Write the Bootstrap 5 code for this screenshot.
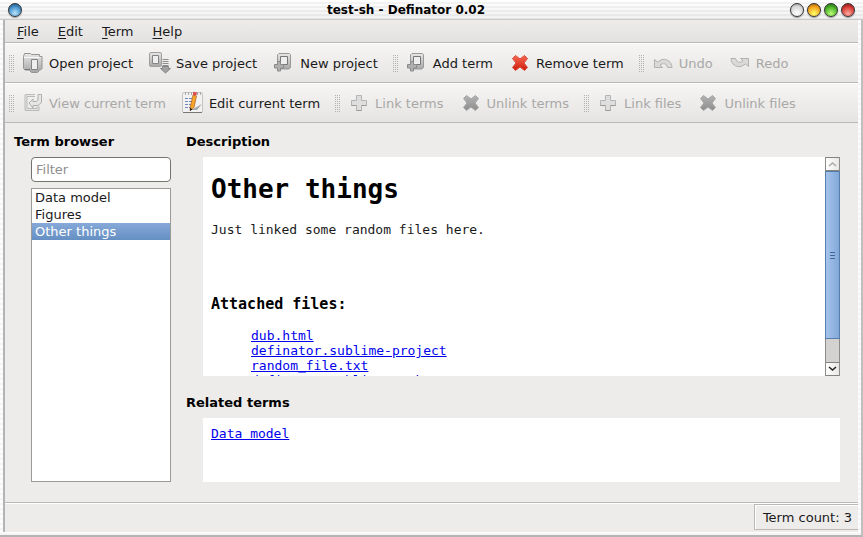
<!DOCTYPE html>
<html lang="en">
<head>
<meta charset="utf-8">
<meta name="viewport" content="width=device-width, initial-scale=1">
<title>test-sh - Definator 0.02</title>
<link rel="stylesheet" href="https://cdn.jsdelivr.net/npm/bootstrap@5.3.0/dist/css/bootstrap.min.css">
<style>
body{font:13px/17px "DejaVu Sans",sans-serif;color:#1a1a1a;background:#f6f6f6;overflow:hidden}
.titlebar{height:20px;padding:0 8px;background:linear-gradient(#fff6,#dcdcdc66),repeating-linear-gradient(#fff 0 2px,#ededed 2px 4px);border-bottom:1px solid #c8c8c8}
.titlebar h1{font-size:12px;line-height:18px;font-weight:bold;color:#000}
.orbs{gap:3px}
.orb{width:14px;height:14px;padding:0;border:1px solid #333;border-radius:50%;box-shadow:0 1px 1px #0005}
.orb-blue{background:radial-gradient(circle at 50% 75%,#b8e4ff,#4a94cc 55%,#0d4779)}
.orb-white{background:radial-gradient(circle at 50% 75%,#fff,#d8d8d8 60%,#888)}
.orb-yellow{background:radial-gradient(circle at 50% 80%,#ffff6a,#f4a31b 60%,#9b4e00)}
.orb-green{background:radial-gradient(circle at 50% 80%,#b9ff7c,#4aae26 60%,#175b05)}
.orb-red{background:radial-gradient(circle at 50% 80%,#ffaaa0,#d43a33 60%,#7a0c0c)}
.frame{border-right:2px solid #c0c0c0;border-bottom:2px solid #b4b4b4;padding:0 3px 3px 3px;background:repeating-linear-gradient(#fdfdfd 0 3px,#f5f5f5 3px 5px)}
.shell{background:#edeceb;border-left:2px solid #b4b4b4}
.menubar{height:23px;padding:0 4px;gap:3px;background:linear-gradient(#edeceb,#e3e2e0);border-bottom:1px solid #bab9b8}
.menubar a{color:#1a1a1a;text-decoration:none;padding:0 8px;line-height:23px}
.menubar u{text-underline-offset:2px}
.toolbar{height:40px;padding-left:4px;gap:1px;background:linear-gradient(#f6f5f4,#e5e4e2);border-top:1px solid #fff;border-bottom:1px solid #bab9b8}
.grip{width:5px;height:17px;margin:0 -1px 0 7px;background:#b4b3b2;-webkit-mask:conic-gradient(from 270deg at 1px 1px,#000 90deg,transparent 0) 0 0/2px 2px;mask:conic-gradient(from 270deg at 1px 1px,#000 90deg,transparent 0) 0 0/2px 2px}
.grip:first-child{margin-left:0}
.tool{font-size:13px;line-height:17px;padding:0 7px;gap:4px;border:0;color:#1a1a1a;border-radius:0}
.tool:disabled{color:#a9a8a7;opacity:1;border:0}
.tool svg{width:24px;height:24px;flex:none}
.tool:disabled svg.pale{opacity:.7}
.workspace{padding:9px 18px 20px 9px;gap:15px}
.sidebar{width:157px;flex:none}
.heading{font-size:13px;line-height:19px;font-weight:bold;color:#000;margin:0}
.inset-l{margin-left:17px}
.filter{height:25px;padding:0 4px;font-size:13px;line-height:17px;border:1px solid #75736f;border-radius:4px;color:#1a1a1a;margin-top:6px;background:#fff}
.filter::placeholder{color:#8f8e8d;opacity:1}
.terms{margin-top:6px;border:1px solid #9c9a97;background:#fff}
.terms .list-group-item{font-size:13px;line-height:17px;padding:0 3px;border:0;color:#1a1a1a;border-radius:0}
.terms .list-group-item.active{margin-top:0!important;background:linear-gradient(#86a9d8,#658fc3);color:#fff}
.doc{font:13px/15px "DejaVu Sans Mono",monospace;background:#fff;color:#1a1a1a}
.doc h2{font-size:26px;line-height:30px;font-weight:bold;color:#000;margin:0 0 18px}
.doc h3{font-size:15px;line-height:18px;font-weight:bold;color:#000;margin:58px 0 15px}
.doc p{margin:0}
.doc a{color:#00e;text-decoration:underline}
.doc ul{margin:0;padding-left:40px}
.description{height:219px;margin-top:6px}
.page-text{padding:17px 8px 0}
.related{margin-top:6px;padding:8px}
.related-title{margin-top:17px}
.scroller{width:15px;flex:none;background:#d3d2d0;border:solid #8e8c89;border-width:0 1px}
.scroller button{height:14px;padding:0;border:solid #858380;border-width:1px 0;background:linear-gradient(90deg,#fff,#e8e7e5)}
.scroller svg{display:block;margin:auto}
.thumb{height:168px;margin:0 -1px;border:1px solid #567ead;background:linear-gradient(90deg,#a6c4ec,#82a8d8)}
.thumb i{width:5px;height:1px;background:#40689b}
.thumb div{gap:2px}
.status{height:30px;padding-bottom:2px;border-top:1px solid #bab9b8;box-shadow:inset 0 1px #fff}
.count{margin-top:1px;padding:4px 6px 0 8px;line-height:18px;border:1px solid #bab9b8;border-right:0;box-shadow:inset 1px 1px #fff}
</style>
<script src="https://cdn.jsdelivr.net/npm/bootstrap@5.3.0/dist/js/bootstrap.bundle.min.js"></script>
</head>
<body>
<svg class="position-absolute" width="0" height="0" aria-hidden="true">
  <defs>
    <linearGradient id="gray" x2="0" y2="1"><stop stop-color="#e8e8e8"/><stop offset="1" stop-color="#a6a6a6"/></linearGradient>
    <linearGradient id="dim" x2="0" y2="1"><stop stop-color="#b3b3b3"/><stop offset="1" stop-color="#8d8d8d"/></linearGradient>
    <linearGradient id="red" x2="0" y2="1"><stop stop-color="#fa6a50"/><stop offset="1" stop-color="#cb1c0c"/></linearGradient>
    <symbol id="open" viewBox="0 0 24 24"><path d="M3.500 2.500h6l1 1h8v2h2.500v12l-1.500 1.500h-1.500v1l-1.500 1.500h-6l-1.500-1.500v-1h-5L2.500 17.500v-12z" fill="url(#gray)" stroke="#949494"/><path d="M3 6.500h17" stroke="#f7f7f7"/><path d="M10.500 8.500h6v10h-6z" fill="#eee" stroke="#838383"/><path d="M4 18.500h5" stroke="#777"/></symbol>
    <symbol id="save" viewBox="0 0 24 24"><rect x="1.500" y="1.500" width="12" height="14" rx="1.500" fill="url(#gray)" stroke="#a0a0a0"/><path d="M4.500 4.500h6v8h-6z" fill="#eee" stroke="#858585"/><path d="M14.500 8.500h6M14.500 10.500h6M14.500 12.500h6M14.500 14.500h6" stroke="#8d8d8d"/><path d="M14.500 15.500h6v2h2l-5 4.500-5-4.500h2z" fill="#a2a2a2" stroke="#868686"/></symbol>
    <symbol id="new" viewBox="0 0 24 24"><path d="M5.500 4 7 2.500h10.500l1 1v13l-1.500 1.500h-11.500z" fill="url(#gray)" stroke="#999"/><path d="M8.500 5.500h7v8h-7z" fill="#eee" stroke="#777"/><path d="M5.500 10.500h3v3h3v3.500h-3v3h-3v-3h-3v-3.500h3z" fill="#b0b0b0" stroke="#8a8a8a"/></symbol>
    <symbol id="view" viewBox="0 0 24 24"><path d="M14 4.500H5v14h12v-3" fill="none" stroke="#a5a5a5" stroke-width="3" stroke-linejoin="round"/><path d="M14 4.500H5v14h12v-3" fill="none" stroke="#e4e4e4"/><path d="M8 12 12 8v2.500h3.500l1.500-1.500V3.500h3.500v8l-3.500 3h-5V17z" fill="#e4e4e4" stroke="#949494"/></symbol>
    <symbol id="edit" viewBox="0 0 24 24"><rect x="1.500" y="1.500" width="20" height="20" rx="1.500" fill="#f2f2f2" stroke="#c4c4c4"/><path d="M2 21.500h19" stroke="#777"/><path d="M4.500 1v3m3-3v3m3-3v3m3-3v3m3-3v3m3-3v3" stroke="#aaa"/><path d="M4 7.500h9M4 10.500h7M4 13.500h6M4 16.500h5" stroke="#7186ba" stroke-dasharray="3 1"/><path d="m10 19 11-6-5 6z" fill="#aaa"/><path d="m12 4 3.500 1L13 16.500 9 19.500l.3-4z" fill="#f7a52b" stroke="#ad621c" stroke-width=".7"/><path d="m12.300.8 3.700.8-.6 3-3.500-.7z" fill="#de4c4c"/><path d="m9.200 16.500-.3 3.500 2.500-1.500z" fill="#222"/></symbol>
    <symbol id="cross" viewBox="0 0 24 24"><path d="M7.500 4.500 12 8l4.500-3.500 3 3-3.500 4.500 3.500 4.500-3 3L12 16l-4.500 3.500-3-3L8 12 4.500 7.500z" stroke-width="1" stroke-linejoin="round"/></symbol>
    <symbol id="plus" viewBox="0 0 24 24"><path d="M9.500 4.500h5v5h5v5h-5v5h-5v-5h-5v-5h5z" fill="#dedede" stroke="#b4b4b4" stroke-linejoin="round"/><path d="M9.500 19.500h5M4.500 14.500h5m5 0h5" stroke="#999"/></symbol>
    <symbol id="undo" viewBox="0 0 24 24"><path d="M3.500 8.500v8h8L9 14c3-2 6-2 7.500 2.500H21c0-5.500-5-9-10-8L6.500 11z" fill="#d2d2d2" stroke="#999" stroke-linejoin="round"/></symbol>
  </defs>
</svg>
<div class="d-flex flex-column vh-100">
  <header class="titlebar d-flex align-items-center flex-shrink-0">
    <button class="orb orb-blue" aria-label="Window menu"></button>
    <h1 class="flex-grow-1 text-center m-0">test-sh - Definator 0.02</h1>
    <div class="orbs d-flex">
      <button class="orb orb-white" aria-label="Shade"></button>
      <button class="orb orb-yellow" aria-label="Minimize"></button>
      <button class="orb orb-green" aria-label="Maximize"></button>
      <button class="orb orb-red" aria-label="Close"></button>
    </div>
  </header>
  <div class="frame d-flex flex-column flex-grow-1">
    <div class="shell d-flex flex-column flex-grow-1">
      <nav class="menubar d-flex flex-shrink-0">
        <a href="#"><u>F</u>ile</a><a href="#"><u>E</u>dit</a><a href="#"><u>T</u>erm</a><a href="#"><u>H</u>elp</a>
      </nav>
      <div class="toolbar d-flex align-items-center flex-shrink-0 text-nowrap">
        <span class="grip"></span>
        <button class="tool btn d-flex align-items-center"><svg><use href="#open"/></svg>Open project</button>
        <button class="tool btn d-flex align-items-center"><svg><use href="#save"/></svg>Save project</button>
        <button class="tool btn d-flex align-items-center"><svg><use href="#new"/></svg>New project</button>
        <span class="grip"></span>
        <button class="tool btn d-flex align-items-center"><svg><use href="#new"/></svg>Add term</button>
        <button class="tool btn d-flex align-items-center"><svg fill="url(#red)" stroke="#d8493b"><use href="#cross"/></svg>Remove term</button>
        <span class="grip"></span>
        <button class="tool btn d-flex align-items-center" disabled><svg class="pale"><use href="#undo"/></svg>Undo</button>
        <button class="tool btn d-flex align-items-center" disabled><svg class="pale" viewBox="0 0 24 24"><g transform="rotate(180 12 12)"><use href="#undo" width="24" height="24"/></g></svg>Redo</button>
      </div>
      <div class="toolbar d-flex align-items-center flex-shrink-0 text-nowrap">
        <span class="grip"></span>
        <button class="tool btn d-flex align-items-center" disabled><svg class="pale"><use href="#view"/></svg>View current term</button>
        <button class="tool btn d-flex align-items-center"><svg><use href="#edit"/></svg>Edit current term</button>
        <span class="grip"></span>
        <button class="tool btn d-flex align-items-center" disabled><svg><use href="#plus"/></svg>Link terms</button>
        <button class="tool btn d-flex align-items-center" disabled><svg fill="url(#dim)" stroke="#a5a5a5"><use href="#cross"/></svg>Unlink terms</button>
        <span class="grip"></span>
        <button class="tool btn d-flex align-items-center" disabled><svg><use href="#plus"/></svg>Link files</button>
        <button class="tool btn d-flex align-items-center" disabled><svg fill="url(#dim)" stroke="#a5a5a5"><use href="#cross"/></svg>Unlink files</button>
      </div>
      <main class="workspace d-flex flex-grow-1">
        <section class="sidebar d-flex flex-column">
          <h2 class="heading"><label for="filter">Term browser</label></h2>
          <div class="inset-l d-flex flex-column flex-grow-1">
            <input class="filter w-100" id="filter" type="text" placeholder="Filter">
            <div class="terms list-group rounded-0 flex-grow-1">
              <a href="#" class="list-group-item">Data model</a>
              <a href="#" class="list-group-item">Figures</a>
              <a href="#" class="list-group-item active">Other things</a>
            </div>
          </div>
        </section>
        <section class="d-flex flex-column flex-grow-1">
          <h2 class="heading">Description</h2>
          <div class="description doc inset-l d-flex overflow-hidden">
            <article class="page-text flex-grow-1">
              <h2>Other things</h2>
              <p>Just linked some random files here.</p>
              <h3>Attached files:</h3>
              <ul class="list-unstyled">
                <li><a href="#">dub.html</a></li>
                <li><a href="#">definator.sublime-project</a></li>
                <li><a href="#">random_file.txt</a></li>
                <li><a href="#">definator.sublime-workspace</a></li>
              </ul>
            </article>
            <div class="scroller d-flex flex-column">
              <button aria-label="Scroll up"><svg width="9" height="6"><path d="m1 5 3.500-3L8 5" fill="none" stroke="#aaa" stroke-width="1.500"/></svg></button>
              <div class="thumb d-flex align-items-center justify-content-center"><div class="d-flex flex-column"><i></i><i></i><i></i></div></div>
              <button class="mt-auto" aria-label="Scroll down"><svg width="9" height="6"><path d="m1 1 3.500 3L8 1" fill="none" stroke="#222" stroke-width="1.500"/></svg></button>
            </div>
          </div>
          <h2 class="heading related-title">Related terms</h2>
          <div class="related doc inset-l flex-grow-1"><a href="#">Data model</a></div>
        </section>
      </main>
      <footer class="status d-flex justify-content-end flex-shrink-0"><div class="count">Term count: 3</div></footer>
    </div>
  </div>
</div>
</body>
</html>
